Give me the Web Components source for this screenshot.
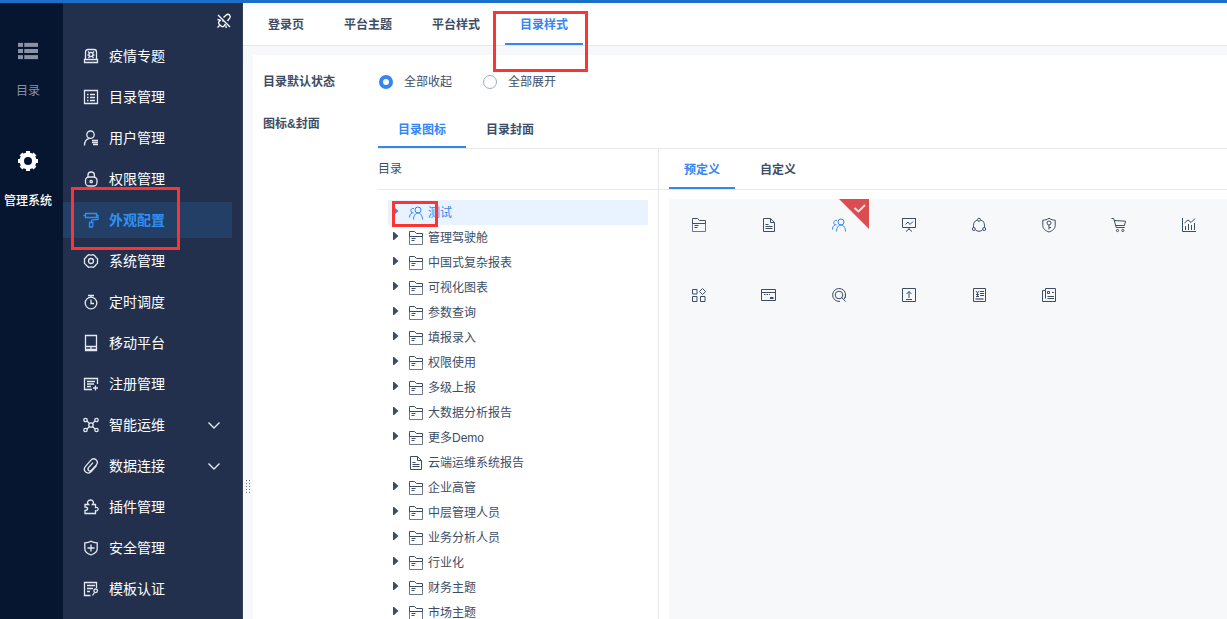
<!DOCTYPE html>
<html lang="zh-CN">
<head>
<meta charset="utf-8">
<title>目录样式</title>
<style>
  body {
    margin: 0;
    font: 12px/20px "Liberation Sans", "Noto Sans CJK SC", sans-serif;
    color: #3d4d66;
    --blue: #3685f2;
    --line: #e6e8ec;
    --pale: #f6f8fa;
    --mark: #fa3534;
  }
</style>
</head>
<body>
<admin-app></admin-app>
<script>
const ICONS = {
  folder: '<path d="M1.5 2.5v-1h5l2 2h6v3h-13zM3.5 8.5h4M3.5 10.5h3"/><path opacity=".75" d="M1.5 2.500v12h13v-8"/>',
  file: '<path d="M2.5 1.5h7l4 4v9h-11zM9.5 1.5v4h4M4.500 7.5h3M4.500 9.500h7M4.500 11.500h7"/>',
  users: '<circle cx="10" cy="5" r="3"/><path d="M5.500 14.500c0-4 2-6.500 4.500-6.500s4.500 2.500 4.500 6.500M6 3.500C4 3 2.800 4.300 2.800 5.600c0 1 .6 1.800 1.200 2.200C2.500 8.500 1.500 10.500 1.500 12.500M4 7.800h1.500"/>',
  board: '<path d="M1 1.500h14M1.500 1.500v9h13v-9M4.500 7.500l2.500-2.500 2 2.500 3-3M8 10.500v2M8 12l-3 2.500M8 12l3 2.500"/>',
  ring: '<path d="M6 3.200C3.500 4 2.500 6 2.500 8.500v2M10 3.200c2.500.8 3.500 2.800 3.500 5.300v2M4.500 13c2 1.700 5 1.700 7 0"/><circle cx="8" cy="2.800" r="1.500"/><circle cx="2.800" cy="12" r="1.500"/><circle cx="13.200" cy="12" r="1.500"/>',
  shieldkey: '<path d="M8 1.200C6 2.800 4 3 1.800 3.200v5.500c0 3 3 5.300 6.200 6.300 3.200-1 6.200-3.300 6.200-6.300V3.200C12 3 10 2.800 8 1.200z"/><circle cx="8" cy="6" r="2"/><path d="M8 8v4.500M8 10.500h2"/>',
  cart: '<path d="M.5 1.500h2.200l2.500 9h8.500M3.200 3.500l11.300.7-1 4.300H4.700"/><circle cx="6.500" cy="13.500" r="1.100"/><circle cx="11.800" cy="13.500" r="1.100"/>',
  chart: '<path d="M1.500 1v13.500H15M4.500 9v4M7.500 7v6M10.500 8v5M13.500 6v7M3.500 6l3.500-3 3 2.500 4-4"/>',
  blocks: '<path d="M1.500 2.500h4.500v4.500h-4.500zM1.500 9.500h4.500v5h-4.500zM9.500 9.500h4.500v5h-4.500zM11.500 1.500l3 3-3 3-3-3z"/>',
  card: '<path d="M.5 2.500h14v11h-14zM.5 5.500h14M3 7.500h1.500M5.500 7.500h1.500M8 7.500h1"/><path d="M9 11h3.500" stroke-width="2"/>',
  search: '<circle cx="8" cy="8" r="3.800"/><path d="M13.200 12A6.500 6.500 0 1 0 9 14.400M10.700 10.700l4 3.800M13.200 12c1-1.300 1.500-3 1.200-5"/>',
  upload: '<path d="M1.500 1.500h13v13h-13zM8 11V4.500M5.500 7L8 4.500 10.500 7M5 12.500h6"/>',
  money: '<path d="M2.500 1.500h12v13h-12zM5 4l1.500 2L8 4M6.500 6v4M5 7.500h3M5 9.500h3M9 4.500h4M9 6.500h4M9 8.500h4"/><path d="M4.500 12h8" stroke-width="2" opacity=".6"/>',
  news: '<path d="M4.500 3.500v-2h10v13h-13v-11h3v8M11 5.500h2M6.500 9.500h6.500M6.500 11.500h6.500M6.500 4.500h2v2h-2z"/>',
  epidemic: '<path d="M2.500 11V4c0-1.500.8-2.500 2.500-2.500h6c1.700 0 2.500 1 2.500 2.500v7M1.500 11.500h13v3h-13z"/><circle cx="8" cy="6.500" r="2"/><path d="M5 3.500l1.500 1.500M11 3.500L9.500 5M4.500 7H6M10 7h1.500M5.500 10l1.300-1.800M10.500 10L9.200 8.200"/>',
  list: '<path d="M1.500 1.500h13v13h-13zM4 5.500h1.500M7 5.500h5M4 8.500h1.500M7 8.500h5M4 11.500h1.500M7 11.500h5"/>',
  user: '<circle cx="7.500" cy="4.700" r="3.700"/><path d="M1.500 15.500c0-4 2-6.700 5-7.200M9 10.500h6M9 12.500h6M10 14.500h5"/>',
  lock: '<rect x="2.500" y="6" width="11.500" height="9" rx="3.500"/><path d="M5 6V4c0-1.700 1.200-3 3.200-3s3.200 1.300 3.200 3v2"/><circle cx="8.200" cy="10.500" r="1.200"/>',
  roller: '<path d="M2.500 1.500h11v4h-11zM2.500 3.500h-2M13.500 3.500h1.500v4L8.500 8v2.500M6.500 10.500h3.500l-.5 4.500h-3z"/>',
  gear: '<path stroke-linejoin="round" d="M5.500 1.700c1.500.5 3.500.5 5 0L12.500 3.500c.3 1 1 1.600 2 2v5c-1 .4-1.700 1-2 2l-2 1.800c-1.500-.5-3.500-.5-5 0L3.500 12.500c-.3-1-1-1.600-2-2v-5c1-.4 1.700-1 2-2z"/><circle cx="8" cy="8" r="2.500"/>',
  timer: '<circle cx="8" cy="9" r="5.800"/><path d="M5 1.500h6M8 1.500v1.700M8 5.500V9.500h3"/>',
  mobile: '<path d="M2.500.5h11v15h-11zM2.500 11.500h11M2.500 14.500h11M8 11v4"/>',
  register: '<path d="M14.500 8V2.500h-13v11H9M4 5.500h8M4 8h7M4 10.500h4M12.500 9.500v5M10 12h5"/>',
  nodes: '<circle cx="2.500" cy="3" r="1.700"/><circle cx="13.500" cy="3" r="1.700"/><circle cx="2.500" cy="13" r="1.700"/><circle cx="13.500" cy="13" r="1.700"/><circle cx="8" cy="8" r="2.200"/><path d="M4 4l2.400 2.400M12 4L9.600 6.400M4 12l2.400-2.400M12 12L9.600 9.600"/>',
  clip: '<path d="M13.500 7.500l-4.800 5.600c-1.700 2-4.300 2.300-6 1-1.700-1.500-1.700-4 0-6l5-5.700C9.200.8 11.500.5 13 1.800c1.700 1.500 1.600 3.700.2 5.300L8.800 12c-1 1.100-2.400 1.200-3.200.5-.9-.8-.8-2 .1-3.100l4.300-4.800"/>',
  plugin: '<path d="M5.500 5.500C3.500 3.500 5 1 7.500 1s4 2.500 2 4.500h3v3c3.500-.8 3.500 4 0 3.200v2.800H2v-3c3.500 0 3.500-3.500 0-3.500v-2.500z"/>',
  shieldplus: '<path d="M8 1.200C6 2.500 4 2.800 1.800 2.800v6c0 3 3 5.200 6.200 6.200 3.200-1 6.200-3.200 6.200-6.200v-6C12 2.800 10 2.500 8 1.200zM8 4.500v7M4.500 8h7"/>',
  template: '<path d="M13.500 7V1.500h-12v13h6M4 4.500h8M4 7.500h6M4 10.500h3M9.500 14.500l2-3"/><circle cx="12.700" cy="9.800" r="1.800"/>',
  pin: '<path stroke-width="1.300" d="M7.500 4.500l2.700-2.500c2.500-2 5.200.8 3.500 3.200L11.500 8M5 7l-2 1.500c-1 1 0 2.500 0 2.500l2.500 2.500s1.500.5 2.500-.5L9.500 11M3.500 12.500L1.500 14.500M2 2l12 12M1.500 6.500l2.500.3M9.800 12.500l.5 2.500M8 7L6.500 8.500"/>',
  down: '<path stroke-width="1.400" d="M2.500 5.500L8 11l5.500-5.500"/>',
  rows: '<g fill="currentColor" stroke="none"><rect y="1.500" width="4" height="3.200"/><rect x="5" y="1.500" width="11" height="3.200"/><rect y="6.400" width="4" height="3.200"/><rect x="5" y="6.400" width="11" height="3.200"/><rect y="11.300" width="4" height="3.200"/><rect x="5" y="11.300" width="11" height="3.200"/></g>',
  cog: '<circle cx="8" cy="8" r="5" stroke-width="3.600"/><path stroke-width="3.200" d="M8 0v2M8 14v2M0 8h2M14 8h2M2.400 2.400l1.400 1.400M12.200 12.200l1.400 1.400M2.400 13.600l1.400-1.400M12.200 3.800l1.400-1.400"/>'
};

function define(name, html, setup) {
  const template = document.createElement('template');
  template.innerHTML = html;
  customElements.define(name, class extends HTMLElement {
    constructor() {
      super();
      this.attachShadow({ mode: 'open' }).append(template.content.cloneNode(true));
    }
    connectedCallback() { if (setup) setup(this, this.shadowRoot); }
  });
}

customElements.define('ui-icon', class extends HTMLElement {
  static observedAttributes = ['name'];
  constructor() {
    super();
    this.attachShadow({ mode: 'open' }).innerHTML = `
      <style>
        :host { display: block; flex: none; width: 16px; height: 16px; }
        svg { display: block; width: 100%; height: 100%; fill: none; stroke: currentColor; stroke-width: var(--stroke, 1); overflow: visible; }
      </style>
      <svg viewBox="0 0 16 16" aria-hidden="true"></svg>`;
  }
  attributeChangedCallback(attribute, before, value) {
    this.shadowRoot.querySelector('svg').innerHTML = ICONS[value] || '';
  }
});

/* Red frame that calls attention to the element it sits over. */
define('mark-box', `
  <style>
    :host { display: block; position: absolute; box-sizing: border-box; border: 3px solid var(--mark); pointer-events: none; z-index: 2; }
  </style>`);

define('rail-item', `
  <style>
    :host { display: block; color: #8a92a4; }
    :host([active]) { color: #fff; }
    a { display: flex; flex-direction: column; align-items: center; gap: 20px; color: inherit; text-decoration: none; white-space: nowrap; }
    ui-icon { width: 20px; height: 20px; }
    :host([active]) span { font-weight: 500; }
  </style>
  <a href="#"><ui-icon></ui-icon><span><slot></slot></span></a>`,
  (el, root) => root.querySelector('ui-icon').setAttribute('name', el.getAttribute('icon')));

define('menu-item', `
  <style>
    :host { display: block; position: relative; margin-right: 10px; }
    a { display: flex; align-items: center; height: 36px; padding: 0 10px 0 20px; gap: 10px; color: #fff; font-size: 14px; text-decoration: none; }
    ui-icon { color: #e4e9f2; --stroke: 1.3; }
    .arrow { display: none; margin-left: auto; }
    :host([group]) .arrow { display: block; }
    :host([active]) a { background: #233f66; color: #2f8ff5; font-weight: bold; }
    :host([active]) ui-icon { color: inherit; }
    mark-box { display: none; top: -15px; left: 8px; width: 109px; height: 63px; }
    :host([active]) mark-box { display: block; }
  </style>
  <a href="#"><ui-icon class="main"></ui-icon><span><slot></slot></span><ui-icon class="arrow" name="down"></ui-icon></a>
  <mark-box></mark-box>`,
  (el, root) => root.querySelector('.main').setAttribute('name', el.getAttribute('icon')));

define('side-menu', `
  <style>
    :host { display: flex; flex: none; }
    .rail { box-sizing: border-box; width: 63px; padding: 38px 7px 0 0; background: #061530; display: flex; flex-direction: column; gap: 50px; }
    .menu { width: 179px; background: #22304d; border-right: 1px solid #32405c; }
    .top { display: flex; justify-content: flex-end; height: 35px; padding-right: 10px; align-items: center; }
    button { border: 0; padding: 0; background: none; color: #fff; }
    .items { display: flex; flex-direction: column; gap: 5px; }
  </style>
  <nav class="rail">
    <rail-item icon="rows">目录</rail-item>
    <rail-item icon="cog" active>管理系统</rail-item>
  </nav>
  <nav class="menu">
    <div class="top"><button aria-label="取消固定"><ui-icon name="pin"></ui-icon></button></div>
    <div class="items">
      <menu-item icon="epidemic">疫情专题</menu-item>
      <menu-item icon="list">目录管理</menu-item>
      <menu-item icon="user">用户管理</menu-item>
      <menu-item icon="lock">权限管理</menu-item>
      <menu-item icon="roller" active>外观配置</menu-item>
      <menu-item icon="gear">系统管理</menu-item>
      <menu-item icon="timer">定时调度</menu-item>
      <menu-item icon="mobile">移动平台</menu-item>
      <menu-item icon="register">注册管理</menu-item>
      <menu-item icon="nodes" group>智能运维</menu-item>
      <menu-item icon="clip" group>数据连接</menu-item>
      <menu-item icon="plugin">插件管理</menu-item>
      <menu-item icon="shieldplus">安全管理</menu-item>
      <menu-item icon="template">模板认证</menu-item>
    </div>
  </nav>`);

define('tab-item', `
  <style>
    :host { display: flex; position: relative; margin-bottom: -1px; }
    button { border: 0; border-bottom: 2px solid transparent; margin: 0 0 1px; padding: var(--tab-top, 4px) var(--tab-pad, 15px) 0; background: none; font: inherit; font-weight: bold; color: inherit; white-space: nowrap; }
    :host([active]) button { color: var(--blue); border-color: var(--blue); }
    mark-box { display: none; top: 8px; left: -12px; width: 95px; height: 61px; }
    :host([marked]) mark-box { display: block; }
  </style>
  <button role="tab"><slot></slot></button><mark-box></mark-box>`);

define('tab-bar', `
  <style>
    :host { display: flex; box-sizing: border-box; border-bottom: 1px solid var(--line); }
  </style>
  <slot></slot>`);

define('tree-row', `
  <style>
    :host { display: flex; align-items: center; position: relative; height: 25px; padding-left: 4px; }
    .arrow { width: 8px; height: 8px; margin-right: 8px; margin-bottom: 3px; }
    .arrow path { fill: currentColor; }
    :host([leaf]) .arrow { visibility: hidden; }
    ui-icon { margin-right: 4px; }
    :host([active]) { background: #e9f2ff; color: var(--blue); }
    mark-box { display: none; top: 1px; left: 4px; width: 46px; height: 26px; }
    :host([active]) mark-box { display: block; }
  </style>
  <svg class="arrow" viewBox="0 0 8 8" aria-hidden="true"><path d="M1 0h1l4.500 4L2 8H1z"/></svg>
  <ui-icon></ui-icon><span><slot></slot></span><mark-box></mark-box>`,
  (el, root) => {
    el.setAttribute('role', 'treeitem');
    root.querySelector('ui-icon').setAttribute('name', el.getAttribute('icon') || 'folder');
  });

define('icon-cell', `
  <style>
    :host { display: block; position: relative; }
    button { display: flex; justify-content: center; width: 60px; height: 60px; padding: 18px 0 0; border: 0; background: none; color: inherit; }
    .check { display: none; position: absolute; top: 0; right: 0; width: 30px; height: 30px; }
    :host([active]) { color: var(--blue); }
    :host([active]) .check { display: block; }
  </style>
  <button><ui-icon></ui-icon></button>
  <svg class="check" viewBox="0 0 30 30" aria-hidden="true"><path d="M0 0h30v30z" fill="#db4d51"/><path d="M15.500 9l4 3.500 6.500-6.500" fill="none" stroke="#f6dcdc" stroke-width="2"/></svg>`,
  (el, root) => {
    root.querySelector('ui-icon').setAttribute('name', el.getAttribute('icon'));
    root.querySelector('button').setAttribute('aria-label', el.getAttribute('icon'));
  });

define('radio-option', `
  <style>
    :host { display: block; }
    label { display: flex; align-items: center; gap: 11px; }
    input { appearance: none; box-sizing: border-box; width: 14px; height: 14px; margin: 0; border: 1px solid #a3abb8; border-radius: 50%; background: #fff; }
    input:checked { border: 4px solid var(--blue); }
  </style>
  <label><input type="radio" name="state"><span><slot></slot></span></label>`,
  (el, root) => { root.querySelector('input').checked = el.hasAttribute('checked'); });

define('catalog-tree', `
  <style>
    :host { display: block; box-sizing: border-box; flex: none; width: 281px; border-right: 1px solid var(--line); }
    header { height: 40px; line-height: 40px; border-bottom: 1px solid var(--line); }
    .rows { padding: 10px; }
  </style>
  <header>目录</header>
  <div class="rows" role="tree">
    <tree-row icon="users" active>测试</tree-row>
    <tree-row>管理驾驶舱</tree-row>
    <tree-row>中国式复杂报表</tree-row>
    <tree-row>可视化图表</tree-row>
    <tree-row>参数查询</tree-row>
    <tree-row>填报录入</tree-row>
    <tree-row>权限使用</tree-row>
    <tree-row>多级上报</tree-row>
    <tree-row>大数据分析报告</tree-row>
    <tree-row>更多Demo</tree-row>
    <tree-row icon="file" leaf>云端运维系统报告</tree-row>
    <tree-row>企业高管</tree-row>
    <tree-row>中层管理人员</tree-row>
    <tree-row>业务分析人员</tree-row>
    <tree-row>行业化</tree-row>
    <tree-row>财务主题</tree-row>
    <tree-row>市场主题</tree-row>
  </div>`);

define('icon-picker', `
  <style>
    :host { display: flex; flex-direction: column; flex: 1; min-width: 0; }
    tab-bar { height: 41px; padding-left: 10px; gap: 10px; }
    .grid { flex: 1; display: grid; grid-template-columns: repeat(auto-fill, 60px); grid-auto-rows: 60px; gap: 10px; align-content: start; margin: 9px 0 0 10px; background: var(--pale); }
  </style>
  <tab-bar role="tablist"><tab-item active>预定义</tab-item><tab-item>自定义</tab-item></tab-bar>
  <div class="grid">
    <icon-cell icon="folder"></icon-cell><icon-cell icon="file"></icon-cell>
    <icon-cell icon="users" active></icon-cell><icon-cell icon="board"></icon-cell>
    <icon-cell icon="ring"></icon-cell><icon-cell icon="shieldkey"></icon-cell>
    <icon-cell icon="cart"></icon-cell><icon-cell icon="chart"></icon-cell>
    <icon-cell icon="blocks"></icon-cell><icon-cell icon="card"></icon-cell>
    <icon-cell icon="search"></icon-cell><icon-cell icon="upload"></icon-cell>
    <icon-cell icon="money"></icon-cell><icon-cell icon="news"></icon-cell>
  </div>`);

define('settings-panel', `
  <style>
    :host { display: flex; flex-direction: column; flex: 1; min-width: 0; min-height: 0; }
    .tabs { height: 43px; padding-left: 10px; gap: 10px; flex: none; background: linear-gradient(#f8f8f9, #fff 8px); }
    .body { display: flex; flex: 1; min-height: 0; background: var(--pale); }
    .grip { display: flex; flex: none; width: 10px; box-sizing: border-box; padding: 0 0 126px 3px; align-items: flex-end; }
    .grip svg { width: 4px; height: 13px; }
    .sheet { flex: 1; min-width: 0; display: grid; grid-template-columns: 115px minmax(0, 1fr); grid-template-rows: auto minmax(0, 1fr); margin-top: 9px; padding: 17px 0 0 10px; row-gap: 22px; background: #fff; overflow: hidden; }
    .label { font-weight: bold; }
    .options { display: flex; gap: 31px; padding-left: 1px; }
    .config { display: flex; flex-direction: column; min-height: 0; }
    .config tab-bar { height: 35px; flex: none; --tab-pad: 20px; --tab-top: 0px; }
    .panes { display: flex; flex: 1; }
  </style>
  <tab-bar class="tabs" role="tablist">
    <tab-item>登录页</tab-item><tab-item>平台主题</tab-item><tab-item>平台样式</tab-item><tab-item active marked>目录样式</tab-item>
  </tab-bar>
  <div class="body">
    <div class="grip"><svg viewBox="0 0 4 13" stroke="#75697a" stroke-dasharray="1 2" aria-hidden="true"><path d="M.5 0v13M3.500 0v13"/></svg></div>
    <div class="sheet">
      <div class="label">目录默认状态</div>
      <div class="options" role="radiogroup" aria-label="目录默认状态">
        <radio-option checked>全部收起</radio-option><radio-option>全部展开</radio-option>
      </div>
      <div class="label">图标&amp;封面</div>
      <div class="config">
        <tab-bar role="tablist"><tab-item active>目录图标</tab-item><tab-item>目录封面</tab-item></tab-bar>
        <div class="panes"><catalog-tree></catalog-tree><icon-picker></icon-picker></div>
      </div>
    </div>
  </div>`);

define('admin-app', `
  <style>
    :host { display: flex; box-sizing: border-box; height: 100vh; border-top: 3px solid #1a70c8; overflow: hidden; background: #fff; }
  </style>
  <side-menu></side-menu><settings-panel></settings-panel>`);
</script>
</body>
</html>
